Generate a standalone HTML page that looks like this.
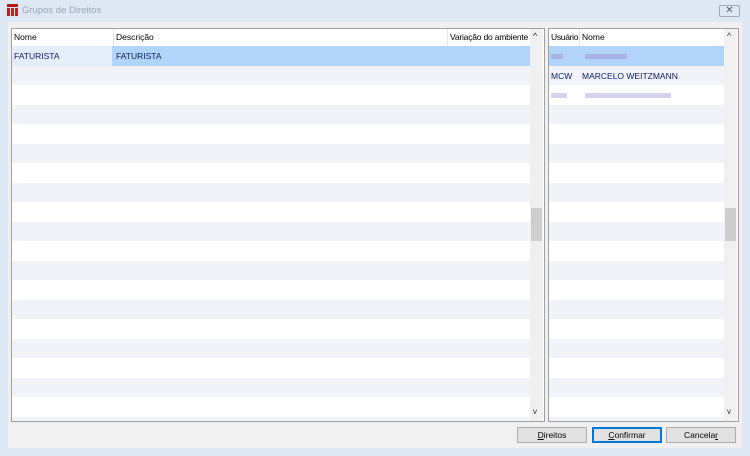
<!DOCTYPE html>
<html><head><meta charset="utf-8"><style>
body{margin:0;width:750px;height:456px;background:#dde8f4;font-family:"Liberation Sans",Arial,sans-serif;font-size:8.5px;color:#000;position:relative;overflow:hidden}
.a{position:absolute;white-space:nowrap}
.title{left:22px;top:5px;color:#9aa7b6;font-size:9.5px}
.client{left:8px;top:22px;width:734px;height:426px;background:#f0f0f0}
.grid{background:#fff;border:1px solid #a0a0a0;overflow:hidden}
.hdr{top:0;height:17px;line-height:17px;border-right:1px solid #e5e5e5;padding-left:2px;box-sizing:border-box;background:#fff;overflow:hidden}
.sb{background:#f0f0f0;width:13px}
.btn{top:427px;height:16px;line-height:15px;background:#e1e1e1;border:1px solid #adadad;text-align:center;font-size:8.5px;box-sizing:border-box}
.blur{background:#a8a8e0;height:5px;opacity:.8}
</style></head><body>
<div class="a" style="left:7px;top:4px;width:11px;height:11px">
<svg width="11" height="12"><rect x="0" y="0" width="11" height="3" fill="#b01818"/><rect x="0" y="4" width="3" height="8" fill="#c02020"/><rect x="4" y="4" width="3" height="8" fill="#c02020"/><rect x="8" y="4" width="3" height="8" fill="#c02020"/></svg></div>
<div class="a title">Grupos de Direitos</div>
<div class="a" style="left:719px;top:5px;width:21px;height:12px;border:1px solid #9aa7b6;border-radius:2px;box-sizing:border-box;text-align:center;line-height:10px;font-size:10px;color:#556">✕</div>
<div class="a client"></div>

<div class="a grid" style="left:11px;top:28px;width:532px;height:392px">
<div id="L"></div>
<div class="a hdr" style="left:0;width:102px">Nome</div>
<div class="a hdr" style="left:102px;width:334px">Descrição</div>
<div class="a hdr" style="left:436px;width:82px;border-right:none;letter-spacing:-0.2px">Variação do ambiente</div>
<div class="a" style="left:0;top:17px;width:100px;height:20px;background:#e4eefa"></div>
<div class="a" style="left:100px;top:17px;width:418px;height:20px;background:#b2d4f8"></div>
<div class="a" style="left:2px;top:17px;line-height:20px;color:#102060">FATURISTA</div>
<div class="a" style="left:104px;top:17px;line-height:20px;color:#102060">FATURISTA</div>
<div class="a sb" style="left:518px;top:0;height:392px"></div>
<div class="a" style="left:519px;top:179px;width:11px;height:33px;background:#cdcdcd"></div>
<div class="a" style="left:521px;top:2px;font-size:9px;color:#333">^</div>
<div class="a" style="left:521px;top:378px;font-size:8px;color:#333">v</div>
</div>

<div class="a grid" style="left:548px;top:28px;width:189px;height:392px">
<div id="R"></div>
<div class="a hdr" style="left:0;width:31px;letter-spacing:-0.3px">Usuário</div>
<div class="a hdr" style="left:31px;width:144px;border-right:none">Nome</div>
<div class="a" style="left:0;top:17px;width:175px;height:20px;background:#b2d4f8"></div>
<div class="a blur" style="left:2px;top:25px;width:12px"></div>
<div class="a blur" style="left:36px;top:25px;width:42px"></div>
<div class="a" style="left:2px;top:37px;line-height:20px;color:#102060">MCW</div>
<div class="a" style="left:33px;top:37px;line-height:20px;color:#102060">MARCELO WEITZMANN</div>
<div class="a blur" style="left:2px;top:64px;width:16px;opacity:.5"></div>
<div class="a blur" style="left:36px;top:64px;width:86px;opacity:.5"></div>
<div class="a sb" style="left:175px;top:0;height:392px"></div>
<div class="a" style="left:176px;top:179px;width:11px;height:33px;background:#cdcdcd"></div>
<div class="a" style="left:178px;top:2px;font-size:9px;color:#333">^</div>
<div class="a" style="left:178px;top:378px;font-size:8px;color:#333">v</div>
</div>

<div class="a btn" style="left:517px;width:70px"><u>D</u>ireitos</div>
<div class="a btn" style="left:592px;width:70px;border:1px solid #0078d7;box-shadow:inset 0 0 0 1px #0078d7"><u>C</u>onfirmar</div>
<div class="a btn" style="left:666px;width:70px">Cancela<u>r</u></div>
<script>
function f(id,w){var h='';for(var i=1;i<20;i++){var t=17+i*19.5;h+='<div class="a" style="left:0;top:'+t+'px;width:'+w+'px;height:19.5px;background:'+(i%2?'#f2f2f9':'#fff')+'"></div>';}document.getElementById(id).innerHTML=h;}
f('L',518);f('R',175);
</script>
</body></html>
